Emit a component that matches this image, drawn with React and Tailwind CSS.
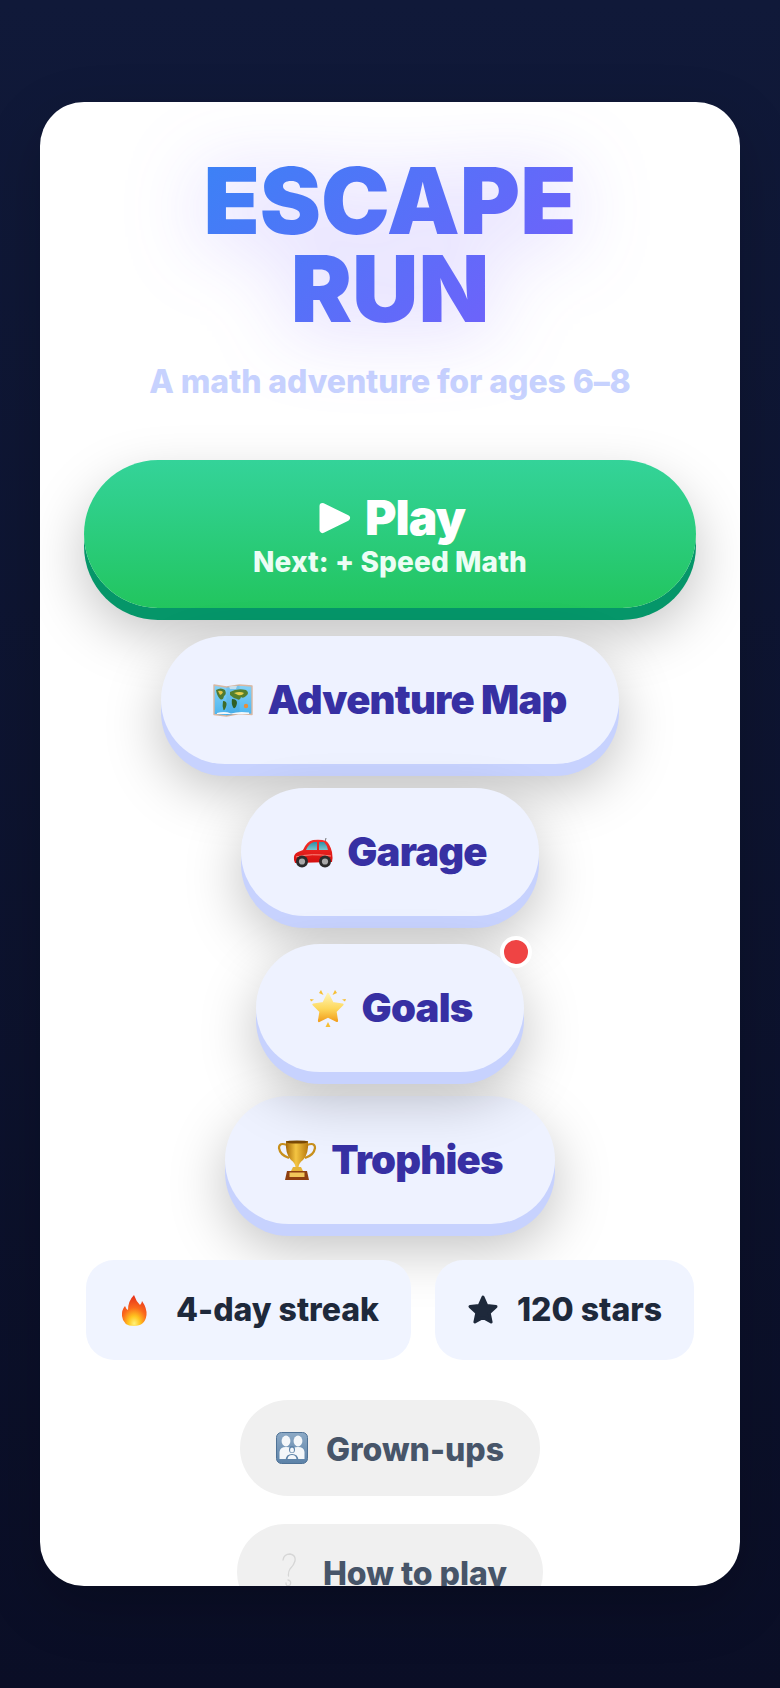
function MapIcon() {
  return (
    <svg width="40" height="34" viewBox="0 0 40 34" className="shrink-0">
      <defs>
        <linearGradient id="sea" x1="0" y1="0" x2="0" y2="1">
          <stop offset="0" stopColor="#86d2f7" />
          <stop offset="1" stopColor="#4ab4ef" />
        </linearGradient>
      </defs>
      <path d="M1 2 L13.5 4 L26.5 2 L39 3 L39 31.5 L26.5 30.5 L13.5 33 L1 31.5 Z" fill="url(#sea)" stroke="#d9b8a2" strokeWidth="1.4" strokeLinejoin="round" />
      <path d="M13.5 4 L26.5 2 L26.5 30.5 L13.5 33 Z" fill="#1f7fc4" opacity="0.15" />
      <path d="M3 7 Q8 4 12 7 Q14 11 11 13 Q10 18 7 16 Q4 13 3 7 Z" fill="#4f7a32" />
      <path d="M5 8 Q8 7 10 9 Q9 12 7 12 Z" fill="#e3c548" />
      <path d="M10 18 Q14 18 13.5 22 Q12 28 10.5 27 Q9 23 10 18 Z" fill="#3f6b2a" />
      <path d="M17 9 Q24 5 33 7 Q37 10 33 13 Q30 16 28 14 Q27 18 24 16 Q20 15 17 12 Z" fill="#55802f" />
      <path d="M21 10 Q27 8 31 10 Q29 13 25 12 Z" fill="#e8cf4f" />
      <path d="M19 16 Q24 16 24 20 Q23 26 20.5 25 Q18 21 19 16 Z" fill="#2f5f26" />
      <circle cx="33" cy="23" r="2.2" fill="#e88f3c" />
      <path d="M4 30 Q12 28 18 30.5 Q26 28 36 29.5 L36 31 L4 31 Z" fill="#f3f8fb" />
      <path d="M16 3.5 Q20 2.5 24 3 L23 6 L17 6 Z" fill="#dfe9ee" opacity="0.75" />
    </svg>
  );
}

function CarIcon() {
  return (
    <svg width="40" height="31" viewBox="0 0 40 31" className="shrink-0">
      <defs>
        <linearGradient id="carBody" x1="0" y1="0" x2="0" y2="1">
          <stop offset="0" stopColor="#f8302a" />
          <stop offset="1" stopColor="#d40f0f" />
        </linearGradient>
        <linearGradient id="carGlass" x1="0" y1="0" x2="0" y2="1">
          <stop offset="0" stopColor="#2f8fa6" />
          <stop offset="1" stopColor="#79c6cf" />
        </linearGradient>
      </defs>
      <path d="M33 1 L32 5" stroke="#555" strokeWidth="0.8" />
      <path d="M1 23 Q0 17 5 15 L10 13 Q14 4 20 3 Q28 2 33 4 Q37 7 39 15 Q40 21 39 25 L2 26 Z" fill="url(#carBody)" />
      <path d="M13 13 Q16 6 21 5 L24 5 L24 13 Z" fill="url(#carGlass)" />
      <path d="M26 5 L31 5 Q34 8 35 13 L26 13 Z" fill="url(#carGlass)" />
      <path d="M3 20 Q18 16 38 19" stroke="#ff8a80" strokeWidth="1" fill="none" />
      <circle cx="9" cy="24.5" r="6" fill="#2b2b2b" />
      <circle cx="9" cy="24.5" r="3.1" fill="#a9a9a9" />
      <circle cx="32" cy="24.5" r="6" fill="#2b2b2b" />
      <circle cx="32" cy="24.5" r="3.1" fill="#a9a9a9" />
    </svg>
  );
}

function GlowStarIcon() {
  return (
    <svg width="40" height="38" viewBox="-2 0 40 38" className="shrink-0">
      <defs>
        <linearGradient id="gold" x1="0" y1="0" x2="0" y2="1">
          <stop offset="0" stopColor="#fff3b0" />
          <stop offset="0.55" stopColor="#fdd75a" />
          <stop offset="1" stopColor="#f2a01f" />
        </linearGradient>
      </defs>
      <path d="M18 5 L22.5 14 L32.5 15.5 L25.5 22.5 L27 32 L18 27.5 L9 32 L10.5 22.5 L3.5 15.5 L13.5 14 Z" fill="url(#gold)" stroke="url(#gold)" strokeWidth="2.2" strokeLinejoin="round" />
      <path d="M11 1 L13.5 6 L9 4 Z M25 1 L27 4 L22.5 6 Z M0 10 L4 10.5 L1 12.5 Z M36 10 L35 12.5 L32 10.5 Z M18 33 L20.5 38 L15.5 38 Z" fill="#f6bf35" />
    </svg>
  );
}

function TrophyIcon() {
  return (
    <svg width="40" height="40" viewBox="-1 0 40 40" className="shrink-0">
      <defs>
        <linearGradient id="cup" x1="0" y1="0" x2="1" y2="0">
          <stop offset="0" stopColor="#a86a08" />
          <stop offset="0.45" stopColor="#f4c542" />
          <stop offset="1" stopColor="#b87a0e" />
        </linearGradient>
      </defs>
      <path d="M9 5 Q1 2 1 8 Q2 15 11 18 M29 5 Q37 2 37 8 Q36 15 27 18" fill="none" stroke="#c8901c" strokeWidth="2.2" />
      <path d="M8 1 L30 1 Q31 14 25 20 Q21 23 20.5 27 L17.5 27 Q17 23 13 20 Q7 14 8 1 Z" fill="url(#cup)" />
      <ellipse cx="19" cy="2" rx="11" ry="1.6" fill="#7a4a06" />
      <path d="M13 31 L15 27 L23 27 L25 31 Z" fill="#e5b437" />
      <path d="M7 40 L9 31 L29 31 L31 40 Z" fill="#8e3f10" />
      <rect x="11.5" y="32.5" width="15" height="4.5" fill="#f1c65a" />
    </svg>
  );
}

function FireIcon() {
  return (
    <svg width="40" height="31" viewBox="-3 0 40 31" className="shrink-0">
      <defs>
        <radialGradient id="flame" cx="0.5" cy="0.92" r="0.85">
          <stop offset="0" stopColor="#fff27a" />
          <stop offset="0.28" stopColor="#ffc51f" />
          <stop offset="0.6" stopColor="#fb6a1c" />
          <stop offset="1" stopColor="#e8361c" />
        </radialGradient>
      </defs>
      <path d="M13 0 Q15 6 19 10 Q21 8 21 6 Q26 13 25.5 20 Q24 31 13 31 Q2 31 1 21 Q0.5 15 4 11 Q5 14 7 15 Q7 6 13 0 Z" fill="url(#flame)" />
    </svg>
  );
}

function FamilyIcon() {
  return (
    <svg width="32" height="32" viewBox="0 0 32 32" className="shrink-0">
      <defs>
        <linearGradient id="tile" x1="0" y1="0" x2="0" y2="1">
          <stop offset="0" stopColor="#8daac6" />
          <stop offset="1" stopColor="#5c82a8" />
        </linearGradient>
      </defs>
      <rect x="0.5" y="0.5" width="31" height="31" rx="5" fill="url(#tile)" stroke="#4f7296" />
      <ellipse cx="10" cy="9" rx="4.4" ry="5.4" fill="#f4f7fa" />
      <ellipse cx="22" cy="9" rx="4.4" ry="5.4" fill="#f4f7fa" />
      <path d="M3.5 27 L3.5 20 Q4 15 10 15 Q16 15 16 18 Q16 15 22 15 Q28 15 28.5 20 L28.5 27 Z" fill="#f4f7fa" />
      <ellipse cx="16" cy="17.5" rx="3" ry="3.6" fill="#5c82a8" />
      <path d="M9.5 28 Q10 22 16 22 Q22 22 22.5 28 Z" fill="#5c82a8" />
      <ellipse cx="16" cy="18" rx="2" ry="2.6" fill="#f4f7fa" />
      <path d="M11.5 27 Q12 23 16 23 Q20 23 20.5 27 Z" fill="#f4f7fa" />
    </svg>
  );
}

function QuestionIcon() {
  return (
    <svg width="32" height="40" viewBox="0 0 32 40" className="shrink-0">
      <path d="M10 8 Q11 2 17 2 Q23 3 22 9 Q21 13 17 17 Q15 20 15.5 24 M15 28 Q19 29 17 33 Q13 35 13 31" fill="none" stroke="#d6d6d6" strokeWidth="1.3" strokeLinecap="round" />
    </svg>
  );
}

function StarIcon() {
  return (
    <svg width="32" height="32" viewBox="0 0 32 32" className="shrink-0">
      <path d="M16 3 L19.8 11.6 L29 12.6 L22.2 18.9 L24.1 28 L16 23.4 L7.9 28 L9.8 18.9 L3 12.6 L12.2 11.6 Z" fill="#1e293b" stroke="#1e293b" strokeWidth="3" strokeLinejoin="round" />
    </svg>
  );
}

function MenuButton({ icon, label, className = "" }) {
  return (
    <button className={`flex h-32 items-center justify-center gap-3.5 rounded-full bg-[#eef2ff] px-[52px] text-[40px] font-black leading-none tracking-[-0.02em] text-[#3730a3] shadow-[0_12px_0_#c7d2fe,0_24px_56px_rgba(0,0,0,0.25)] ${className}`}>
      {icon}
      <span>{label}</span>
    </button>
  );
}

function StatCard({ icon, label }) {
  return (
    <div className="flex h-[100px] items-center gap-[18px] rounded-[28px] bg-[#f0f4ff] px-8 text-[32px] font-extrabold text-[#1e293b]">
      {icon}
      <span>{label}</span>
    </div>
  );
}

function SecondaryButton({ icon, label, className = "" }) {
  return (
    <button className={`flex h-24 shrink-0 items-center gap-[18px] rounded-full bg-[#f0f0f0] px-9 text-[32px] font-extrabold text-[#475569] ${className}`}>
      {icon}
      <span className="pt-1">{label}</span>
    </button>
  );
}

export default function App() {
  return (
    <div className="h-[1688px] overflow-hidden bg-gradient-to-b from-[#101939] to-[#0a0e26] pt-[102px] font-['Inter',sans-serif]">
      <main className="mx-10 flex h-[1484px] flex-col items-center overflow-hidden rounded-[44px] bg-white px-11 pt-[55px] shadow-[0_20px_60px_rgba(0,0,0,0.2)]">
        <h1 className="bg-[linear-gradient(135deg,#3b82f6,#785cfb)] bg-clip-text text-center text-[92px] font-black leading-[88px] text-transparent drop-shadow-[0_8px_40px_rgba(110,80,255,0.3)]">
          ESCAPE
          <br />
          RUN
        </h1>
        <p className="mt-[25px] text-[32px] font-extrabold tracking-[-0.1px] text-[#c7d2fe]">A math adventure for ages 6–8</p>

        <button className="mt-[54px] flex h-[148px] w-full shrink-0 flex-col items-center justify-center rounded-full bg-gradient-to-b from-[#34d399] to-[#22c55e] text-white shadow-[0_12px_0_#059669,0_24px_56px_rgba(0,0,0,0.25)]">
          <span className="flex items-center gap-3.5 pl-1 text-[48px] font-black leading-[56px] tracking-[-0.02em]">
            <svg width="32" height="32" viewBox="0 0 32 32" className="shrink-0">
              <path d="M3.5 4 L28 16 L3.5 28 Z" fill="#fff" stroke="#fff" strokeWidth="6" strokeLinejoin="round" />
            </svg>
            <span>Play</span>
          </span>
          <span className="text-[28px] font-extrabold leading-8 tracking-[0.1px] text-[#ecfdf5]">Next: + Speed Math</span>
        </button>

        <div className="mt-7 flex flex-col items-center">
          <MenuButton icon={<MapIcon />} label="Adventure Map" />
          <MenuButton icon={<CarIcon />} label="Garage" className="mt-6" />
          <div className="relative mt-7">
            <MenuButton icon={<GlowStarIcon />} label="Goals" />
            <span className="absolute -right-2 -top-2 h-8 w-8 rounded-full border-4 border-white bg-[#ef4444]" />
          </div>
          <MenuButton icon={<TrophyIcon />} label="Trophies" className="mt-6" />
        </div>

        <div className="mt-9 flex gap-6">
          <StatCard icon={<FireIcon />} label="4-day streak" />
          <StatCard icon={<StarIcon />} label="120 stars" />
        </div>

        <SecondaryButton icon={<FamilyIcon />} label="Grown-ups" className="mt-10" />
        <SecondaryButton icon={<QuestionIcon />} label="How to play" className="mt-7" />
      </main>
    </div>
  );
}
